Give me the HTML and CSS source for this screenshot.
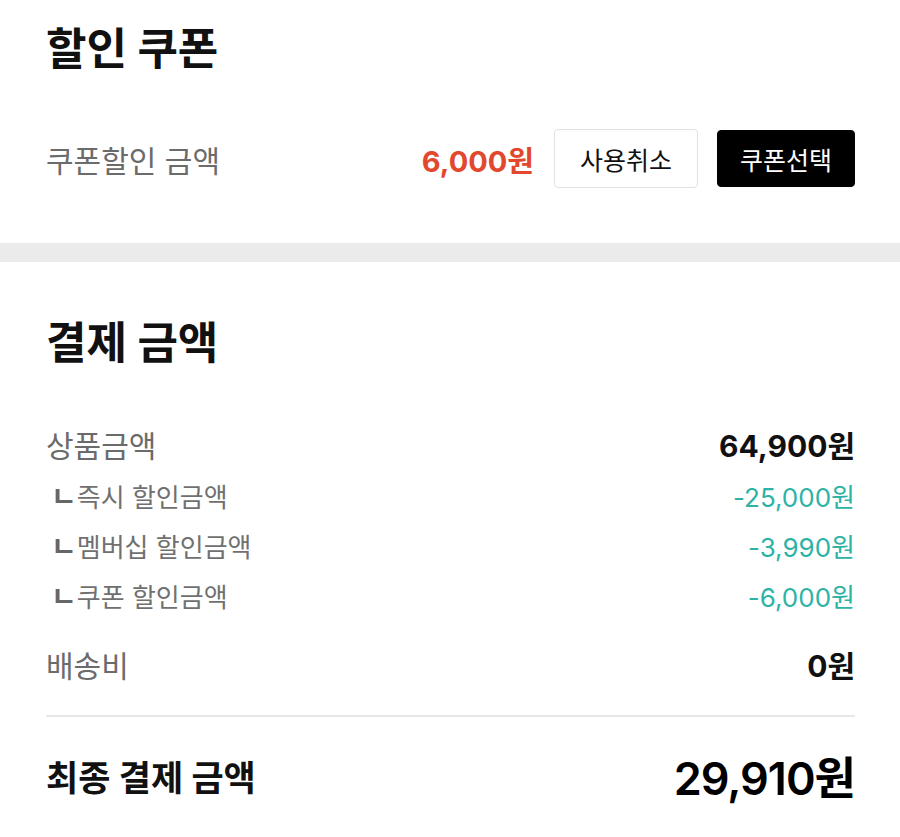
FILE: index.html
```html
<!DOCTYPE html>
<html lang="ko">

<head>
    <meta charset="UTF-8" />
    <meta name="viewport" content="width=device-width, initial-scale=1.0" />
    <title>결제 | 할인 쿠폰</title>
    <link rel="stylesheet" href="styles.css">
</head>

<body>

    <section class="coupon">
        <h2 class="section-title">할인 쿠폰</h2>
        <div class="coupon-row">
            <span class="label">쿠폰할인 금액</span>
            <span class="coupon-amount">6,000원</span>
            <button class="btn btn-outline">사용취소</button>
            <button class="btn btn-dark">쿠폰선택</button>
        </div>
    </section>

    <div class="band"></div>

    <section class="payment">
        <h2 class="section-title">결제 금액</h2>

        <div class="row main-row">
            <span class="label">상품금액</span>
            <span class="value">64,900원</span>
        </div>
        <div class="row sub-row">
            <span class="sub-label"><span class="branch">ㄴ</span>즉시 할인금액</span>
            <span class="discount">-25,000원</span>
        </div>
        <div class="row sub-row">
            <span class="sub-label"><span class="branch">ㄴ</span>멤버십 할인금액</span>
            <span class="discount">-3,990원</span>
        </div>
        <div class="row sub-row">
            <span class="sub-label"><span class="branch">ㄴ</span>쿠폰 할인금액</span>
            <span class="discount">-6,000원</span>
        </div>
        <div class="row main-row shipping">
            <span class="label">배송비</span>
            <span class="value">0원</span>
        </div>

        <div class="divider"></div>

        <div class="row total-row">
            <span class="total-label">최종 결제 금액</span>
            <span class="total-value">29,910원</span>
        </div>
    </section>

</body>

</html>
```

FILE: styles.css
```css
body {
    margin: 0;
    font-family: Inter, "Noto Sans CJK KR", sans-serif;
    background-color: #ffffff;
    color: #111;
}

section {
    padding: 0 45px 0 46px;
}

.section-title {
    margin: 0;
    font-size: 44px;
    line-height: 48px;
    font-weight: 700;
    color: #111;
}

.coupon {
    padding-top: 25px;
    padding-bottom: 55px;
}

.coupon-row {
    display: flex;
    align-items: center;
    margin-top: 56px;
    height: 59px;
}

.label {
    font-size: 30px;
    color: #6b6b6b;
    flex: 1;
}

.coupon-amount {
    font-size: 29px;
    font-weight: 700;
    color: #e1482e;
    margin-right: 20px;
}

.btn {
    height: 59px;
    padding: 0;
    font-family: inherit;
    font-size: 25px;
    white-space: nowrap;
    border-radius: 4px;
    cursor: pointer;
}

.btn-outline {
    background-color: #fff;
    border: 1px solid #e2e2e2;
    color: #111;
    width: 144px;
}

.btn-dark {
    background-color: #000;
    border: 1px solid #000;
    color: #fff;
    margin-left: 19px;
    width: 138px;
    height: 57px;
}

.band {
    height: 19px;
    background-color: #ebebeb;
}

.payment {
    padding-top: 57px;
    padding-bottom: 30px;
}

.row {
    display: flex;
    align-items: center;
    justify-content: space-between;
}

.main-row {
    height: 52px;
    margin-top: 51px;
}

.sub-row {
    height: 50px;
}

.shipping {
    margin-top: 19px;
    height: 50px;
}

.value {
    font-size: 30px;
    font-weight: 700;
    color: #111;
}

.sub-label {
    font-size: 26px;
    color: #707070;
    padding-left: 9px;
}

.branch {
    font-size: 28px;
    font-weight: 700;
    color: #666;
    margin-left: -4px;
}

.discount {
    font-size: 26px;
    color: #2db3a6;
}

.divider {
    height: 2px;
    background-color: #e8e8e8;
    margin-top: 26px;
}

.total-row {
    height: 60px;
    margin-top: 28px;
}

.total-label {
    font-size: 35px;
    font-weight: 700;
    color: #111;
}

.total-value {
    font-size: 45px;
    font-weight: 600;
    color: #000;
    letter-spacing: -1px;
}
```
